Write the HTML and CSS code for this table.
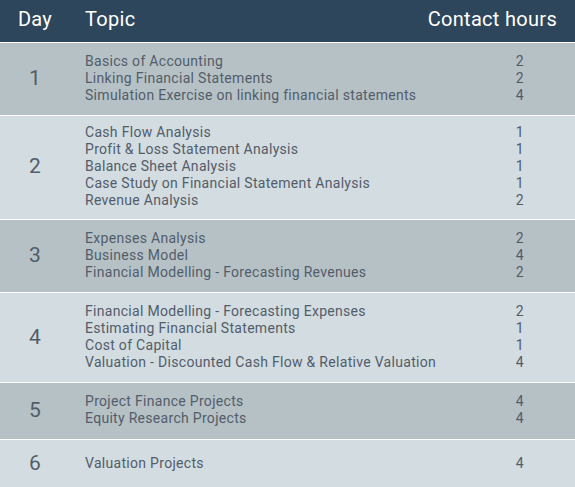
FILE: index.html
```html
<!DOCTYPE html>
<html lang="en">

<head>
  <meta charset="UTF-8">
  <title>Course Schedule</title>
  <link rel="stylesheet" href="styles.css">
</head>

<body>

  <div class="schedule">
    <div class="row head">
      <div class="day">Day</div>
      <div class="topic">Topic</div>
      <div class="hours">Contact hours</div>
    </div>

    <div class="row dark">
      <div class="day">1</div>
      <div class="topic">
        <div>Basics of Accounting</div>
        <div>Linking Financial Statements</div>
        <div>Simulation Exercise on linking financial statements</div>
      </div>
      <div class="hours">
        <div>2</div>
        <div>2</div>
        <div>4</div>
      </div>
    </div>

    <div class="row light tight">
      <div class="day">2</div>
      <div class="topic">
        <div>Cash Flow Analysis</div>
        <div>Profit &amp; Loss Statement Analysis</div>
        <div>Balance Sheet Analysis</div>
        <div>Case Study on Financial Statement Analysis</div>
        <div>Revenue Analysis</div>
      </div>
      <div class="hours">
        <div>1</div>
        <div>1</div>
        <div>1</div>
        <div>1</div>
        <div>2</div>
      </div>
    </div>

    <div class="row dark">
      <div class="day">3</div>
      <div class="topic">
        <div>Expenses Analysis</div>
        <div>Business Model</div>
        <div>Financial Modelling - Forecasting Revenues</div>
      </div>
      <div class="hours">
        <div>2</div>
        <div>4</div>
        <div>2</div>
      </div>
    </div>

    <div class="row light">
      <div class="day">4</div>
      <div class="topic">
        <div>Financial Modelling - Forecasting Expenses</div>
        <div>Estimating Financial Statements</div>
        <div>Cost of Capital</div>
        <div>Valuation - Discounted Cash Flow &amp; Relative Valuation</div>
      </div>
      <div class="hours">
        <div>2</div>
        <div>1</div>
        <div>1</div>
        <div>4</div>
      </div>
    </div>

    <div class="row dark loose">
      <div class="day">5</div>
      <div class="topic">
        <div>Project Finance Projects</div>
        <div>Equity Research Projects</div>
      </div>
      <div class="hours">
        <div>4</div>
        <div>4</div>
      </div>
    </div>

    <div class="row light last">
      <div class="day">6</div>
      <div class="topic">
        <div>Valuation Projects</div>
      </div>
      <div class="hours">
        <div>4</div>
      </div>
    </div>
  </div>

</body>

</html>
```

FILE: styles.css
```css
body {
  margin: 0;
  background: #ffffff;
  font-family: Roboto, "Liberation Sans", sans-serif;
  letter-spacing: 0.3px;
}

.schedule {
  display: flex;
  flex-direction: column;
  gap: 1px;
  background: #ffffff;
}

.row {
  display: grid;
  grid-template-columns: 70px 1fr 90px;
  align-items: center;
  padding: 10px 0 11px;
  color: #525d6a;
  font-size: 14px;
  line-height: 17px;
}

.row .day {
  text-align: center;
  font-size: 21px;
  letter-spacing: 0;
}

.row .topic {
  padding-left: 15px;
  white-space: nowrap;
}

.row .hours {
  text-align: right;
  padding-right: 51px;
}

.head {
  grid-template-columns: 70px 1fr auto;
  background: #2d465b;
  color: #ffffff;
  height: 42px;
  padding: 0 0 4px;
  font-size: 20px;
  line-height: 24px;
  box-sizing: border-box;
}

.head .day {
  font-size: 20px;
  letter-spacing: 0.3px;
}

.head .hours {
  padding-right: 18px;
  white-space: nowrap;
}

.dark {
  background: #b6c1c6;
}

.light {
  background: #d3dce1;
}

.tight {
  padding: 8px 0 10px;
}

.loose {
  padding: 10px 0 12px;
}

.last {
  padding: 15px 0;
}
```
